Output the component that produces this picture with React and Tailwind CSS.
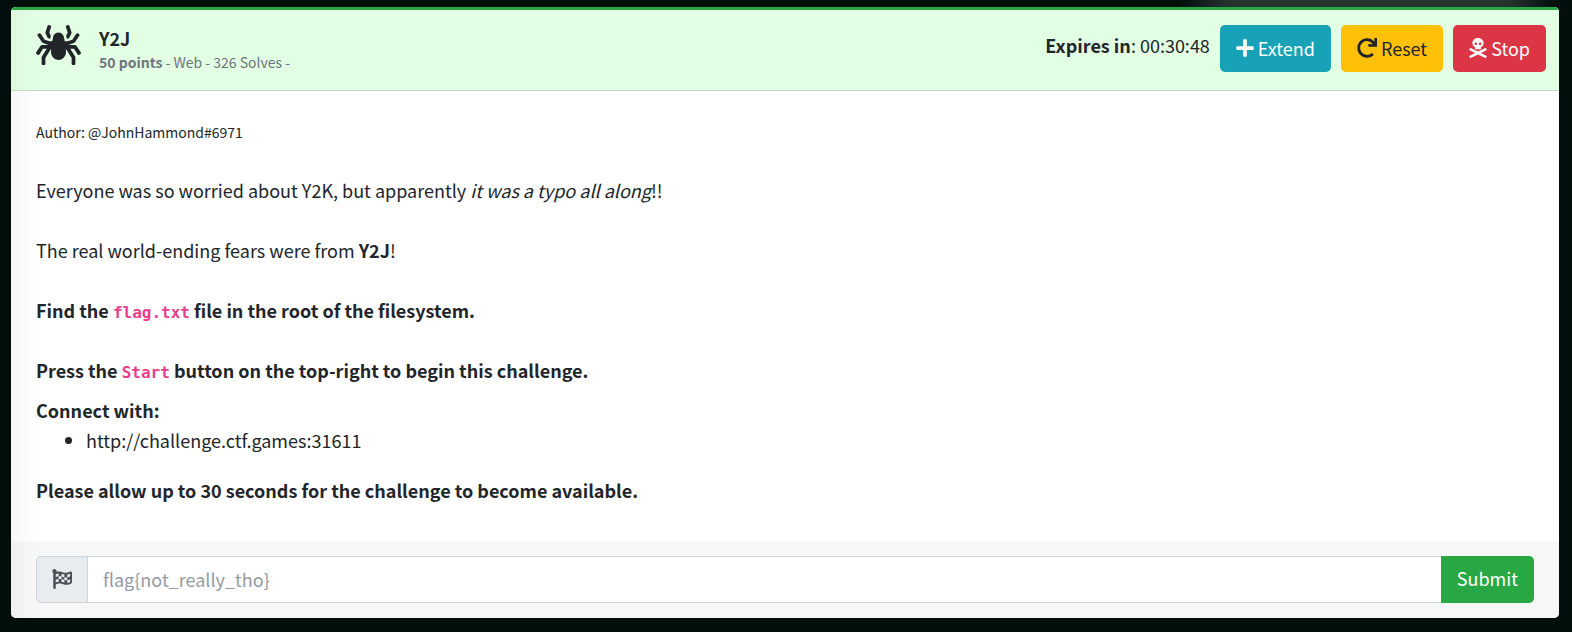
import { FaSpider, FaPlus, FaRedo, FaSkullCrossbones, FaFlagCheckered } from "react-icons/fa";

function ActionButton({ icon: Icon, iconWidth, tone, children }) {
  return (
    <button
      type="button"
      className={`flex h-[47px] items-center gap-1 rounded-[5px] px-4 pb-0.5 text-lg ${tone}`}
    >
      <Icon className={`h-5 shrink-0 ${iconWidth}`} aria-hidden="true" />
      {children}
    </button>
  );
}

function Code({ children }) {
  return (
    <code className="font-['DejaVu_Sans_Mono',monospace] text-base leading-none text-[#e83e8c]">
      {children}
    </code>
  );
}

function Header() {
  return (
    <header className="flex items-start justify-between border-t-[3px] border-b border-t-[#28a745] border-b-[#c3dbc5] bg-[#e3ffe3] bg-linear-to-r from-black/3 to-transparent to-[25px] pt-[15px] pr-[13px] pb-[17px] pl-[25px]">
      <div className="flex gap-[18px]">
        <FaSpider className="h-10 w-[45px]" aria-hidden="true" />
        <div>
          <h1 className="text-lg leading-[26px] font-bold">Y2J</h1>
          <p className="text-sm leading-[22px] text-[#6c757d]">
            <strong>50 points</strong> - Web - 326 Solves -
          </p>
        </div>
      </div>
      <div className="flex gap-[10px]">
        <p className="text-lg leading-10">
          <strong>Expires in</strong>: 00:30:48
        </p>
        <ActionButton icon={FaPlus} iconWidth="w-[18px]" tone="bg-[#17a2b8] text-white">
          Extend
        </ActionButton>
        <ActionButton icon={FaRedo} iconWidth="w-5" tone="bg-[#ffc107] text-[#212529]">
          Reset
        </ActionButton>
        <ActionButton icon={FaSkullCrossbones} iconWidth="w-[18px]" tone="bg-[#dc3545] text-white">
          Stop
        </ActionButton>
      </div>
    </header>
  );
}

function Description() {
  return (
    <div className="bg-linear-to-r from-black/3 to-transparent to-[25px] px-[25px] pt-6 pb-9 text-lg leading-[30px]">
      <div className="flex flex-col gap-[30px]">
        <p className="pt-1 text-sm leading-[26px]">Author: @JohnHammond#6971</p>
        <p>
          Everyone was so worried about Y2K, but apparently <em>it was a typo all along</em>!!
        </p>
        <p>
          The real world-ending fears were from <strong>Y2J</strong>!
        </p>
        <p className="font-bold">
          Find the <Code>flag.txt</Code> file in the root of the filesystem.
        </p>
        <p className="font-bold">
          Press the <Code>Start</Code> button on the top-right to begin this challenge.
        </p>
      </div>
      <p className="mt-[10px] font-bold">Connect with:</p>
      <ul className="mb-5 list-disc pl-[50px]">
        <li>http://challenge.ctf.games:31611</li>
      </ul>
      <p className="font-bold">Please allow up to 30 seconds for the challenge to become available.</p>
    </div>
  );
}

function FlagForm() {
  return (
    <form
      className="flex bg-[#f7f7f7] bg-linear-to-r from-black/3 to-transparent to-[25px] px-[25px] py-[15px]"
      onSubmit={(e) => e.preventDefault()}
    >
      <label
        htmlFor="flag"
        className="flex h-[47px] w-[52px] items-center justify-center rounded-l-[5px] border border-[#ced4da] bg-[#e9ecef] pb-0.5 text-[#495057]"
      >
        <FaFlagCheckered className="size-5" aria-label="Flag" />
      </label>
      <input
        id="flag"
        type="text"
        placeholder="flag{not_really_tho}"
        className="h-[47px] min-w-0 flex-1 border-y border-[#ced4da] bg-white px-[15px] pb-0.5 text-lg placeholder:text-[#939ba2] focus:outline-none"
      />
      <button
        type="submit"
        className="h-[47px] rounded-r-[5px] bg-[#28a745] px-4 pb-[3px] text-lg text-white"
      >
        Submit
      </button>
    </form>
  );
}

export default function App() {
  return (
    <div className="min-h-screen bg-[#000f0c] bg-[linear-gradient(90deg,transparent_75%,#26322e_78%,#26322e_96%,transparent_99%)] bg-[length:100%_8px] bg-no-repeat pt-[7px] pr-[13px] pb-[14px] pl-[11px] font-['Noto_Sans_CJK_SC',sans-serif] text-[#212529]">
      <main className="overflow-hidden rounded-[5px] bg-white">
        <Header />
        <Description />
        <FlagForm />
      </main>
    </div>
  );
}
